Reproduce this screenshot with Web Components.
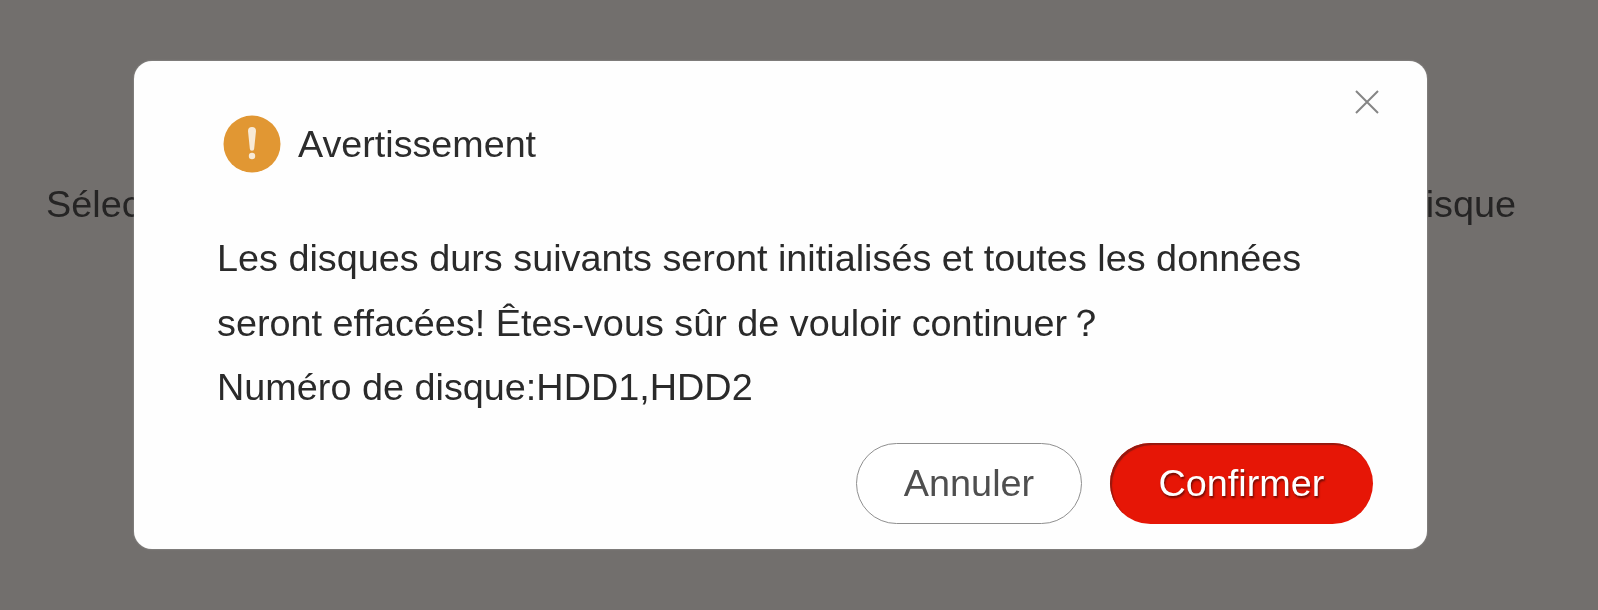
<!DOCTYPE html>
<html lang="fr"><head><meta charset="utf-8"><title>Avertissement</title>
<style>
html,body{margin:0;height:610px;overflow:hidden;background:#716e6c;font-family:"Liberation Sans",Arial,sans-serif}
</style></head><body>
<template id="page-t"><style>
:host{display:block;height:610px;position:relative;background:#726f6d;overflow:hidden;filter:blur(.6px)}
.row{display:flex;justify-content:space-between;padding:185px 82px 0 46px;font-size:37.8px;line-height:38px;color:#252424}
.overlay{position:absolute;inset:0;padding:61px 0 0 134px;box-sizing:border-box}
</style>
<div class="row"><span>Sélectionner le disque</span><span>Numéro de disque</span></div>
<div class="overlay"><slot></slot></div></template>

<template id="dialog-t"><style>
:host{display:flex;flex-direction:column;box-sizing:border-box;width:1293px;height:488px;background:#fefefe;border-radius:18px;padding:54px 54px 25px 83px;position:relative;box-shadow:0 0 2px rgba(255,255,255,.35)}
.head{display:flex;align-items:center;gap:17px;font-size:37.7px;line-height:58px;color:#2c2c2c;margin-left:6px}
.body{margin-top:53px;font-size:37.8px;line-height:64.7px;color:#2a2a2a;white-space:nowrap}
.foot{display:flex;justify-content:flex-end;gap:28px;margin-top:auto}
.close{position:absolute;top:28px;right:47px;width:26px;height:26px;display:block}
</style>
<svg class="close" viewBox="0 0 26 26" aria-label="Fermer"><path d="M2 2 24 24M24 2 2 24" stroke="#858585" stroke-width="2" fill="none"/></svg>
<div class="head"><slot name="icon"></slot><slot name="title"></slot></div>
<div class="body"><slot></slot></div>
<div class="foot"><slot name="actions"></slot></div></template>

<template id="btn-t"><style>
:host{display:inline-flex;align-items:center;justify-content:center;box-sizing:border-box;height:81px;border-radius:41px;font-size:37.8px;cursor:pointer}
:host([kind=ghost]){width:226px;background:#fff;border:1.5px solid #8f8f8f;color:#4f4f4f}
:host([kind=danger]){width:263px;background:#e61606;color:#fff;box-shadow:inset 2px 2px 1px #94190f;text-shadow:1px 2px 2px rgba(90,10,5,.85)}
</style><slot></slot></template>

<template id="icon-t"><style>:host{display:block;width:58px;height:58px}svg{display:block}</style>
<svg viewBox="0 0 58 58" width="58" height="58"><circle cx="29" cy="29" r="28.5" fill="#e19733"/><path d="M25 16a4 4 0 0 1 8 0L31.2 33.5a2.2 2.2 0 0 1-4.4 0Z" fill="#f8ead6"/><circle cx="29" cy="41" r="3.2" fill="#f8ead6"/></svg></template>

<ui-page><ui-dialog>
<ui-warn-icon slot="icon"></ui-warn-icon>
<span slot="title">Avertissement</span>
Les disques durs suivants seront initialisés et toutes les données<br>seront effacées! Êtes-vous sûr de vouloir continuer？<br>Numéro de disque:HDD1,HDD2
<ui-btn slot="actions" kind="ghost">Annuler</ui-btn>
<ui-btn slot="actions" kind="danger">Confirmer</ui-btn>
</ui-dialog></ui-page>
<script>
for(const [n,t] of [['ui-page','page-t'],['ui-dialog','dialog-t'],['ui-btn','btn-t'],['ui-warn-icon','icon-t']]){
customElements.define(n,class extends HTMLElement{constructor(){super();this.attachShadow({mode:'open'}).appendChild(document.getElementById(t).content.cloneNode(true))}});
}
</script></body></html>
